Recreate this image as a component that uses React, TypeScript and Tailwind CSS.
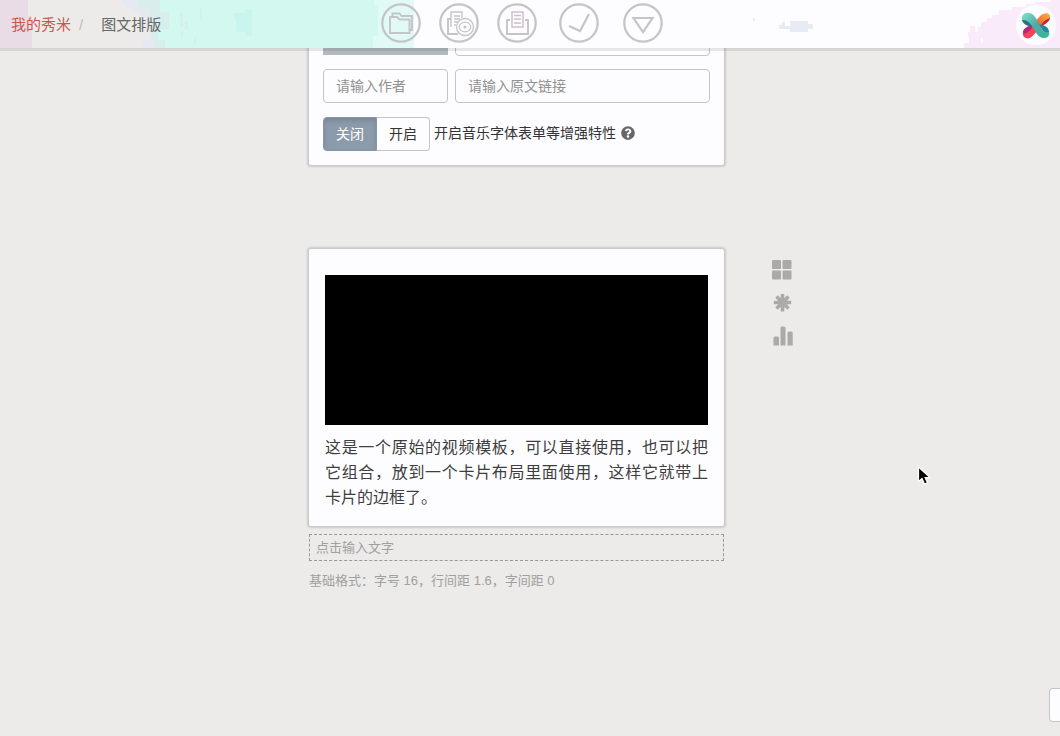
import React from "react";
import { FaQuestionCircle } from "react-icons/fa";

function HeaderWash() {
  return (
    <div className="pointer-events-none absolute inset-0 -z-10 flex justify-between overflow-hidden" aria-hidden="true">
      <svg width="440" height="48" viewBox="0 0 440 48" shapeRendering="crispEdges" className="shrink-0">
        <rect width="155" height="48" fill="#ecebe9" />
        <path d="M0 0h28v16h4v32H0Z" fill="#e9dce6" />
        <path d="M122 0h33v48h-13v-7h7V25h-3v-7h-7v-5h-8V8h-6V4h-3Z" fill="#e4e9f2" />
        <path d="M137 0h45v48h-27v-7h-4V23h-2V8h-12Z" fill="#d8eeec" />
        <path d="M160 0h214v5h4v31h-5v12H165V40h-7V29h11V12h-9Z" fill="#d2f8f0" />
        <path d="M374 0h40v48h-41V36h5V5h-4Z" fill="#e2faf7" />
        <path d="M245 9h7v27h-7v-4h-9V18h-2v-5h11Z" fill="#caf5ef" />
        <path d="M180 13h3v13h-3ZM185 22h3v8h-3ZM200 9h2v11h-2ZM181 32h2v6h-2ZM194 38h2v6h-2Z" fill="#d8eeec" />
      </svg>
      <svg width="320" height="48" viewBox="0 0 320 48" shapeRendering="crispEdges" className="shrink-0">
        <path d="M320 0h-9v2h-16v2h-9v3h-14v3h-13v5h-7v3h-5v4h-6v5h-3v5h-3v-6h-5v6h-2v5h1v6h-5v5h96Z" fill="#f9ebfa" />
        <path d="M241 38h2v5h-2Z" fill="#fdfdff" />
        <path d="M13 18h2v3h-2ZM50 21h18v3h5v5h-5v3H50v-3H39v-4h3v-3h3v4h5Z" fill="#e6ebf4" />
      </svg>
    </div>
  );
}

function ToolButton({ label, children }: { label: string; children: React.ReactNode }) {
  return (
    <button type="button" aria-label={label} className="size-10 shrink-0">
      <svg viewBox="0 0 40 40" fill="none" stroke="#c5c4c6" strokeWidth="1.9" className="size-10">
        <circle cx="20" cy="20" r="18.7" strokeWidth="2.3" />
        {children}
      </svg>
    </button>
  );
}

function Logo() {
  return (
    <svg viewBox="0 0 40 40" className="size-10">
      <defs>
        <linearGradient id="teal" x1="0" y1="0" x2="1" y2="1">
          <stop offset="0" stopColor="#7be6cd" />
          <stop offset=".5" stopColor="#50a8a5" />
          <stop offset="1" stopColor="#2ebd99" />
        </linearGradient>
        <linearGradient id="warm" x1="1" y1="0" x2="0" y2="1">
          <stop offset="0" stopColor="#fbb33e" />
          <stop offset=".5" stopColor="#ee5936" />
          <stop offset="1" stopColor="#f43b60" />
        </linearGradient>
      </defs>
      <circle cx="20" cy="20" r="20" fill="#fdfdff" />
      <path d="M27 9c4-2 8 0 7 4-1 5-7 7-11 11-4 3-6 8-10 9-4 1-7-2-6-6 1-5 7-6 11-9 4-4 5-7 9-9Z" fill="url(#warm)" />
      <path d="M34 13c-3 1-7 3-9 8 4-2 8-4 9-8Z" fill="#b5273e" />
      <path d="M7 27c1-4 5-6 10-7-1 5-5 7-9 9Z" fill="#b92578" />
      <path d="M9 30c5-1 6-6 10-9l4 3c-4 3-6 8-10 9-2 1-4-1-4-3Z" fill="#f4425c" />
      <path d="M6 15c2-2 7 0 11 7-6-1-10-3-11-7Z" fill="#296f86" />
      <path d="M23 19c5 1 10 3 10 8-1 4-6 1-10-8Z" fill="#2a829d" />
      <path d="M13 8c6 1 8 7 11 13 2 5 5 7 9 6 1 3-1 6-5 6-7 0-8-7-12-12-3-5-6-6-10-6-1-5 3-8 7-7Z" fill="url(#teal)" />
    </svg>
  );
}

const fieldClass =
  "h-[34px] min-w-0 rounded-sm border border-[#c3c4c5] bg-transparent px-3 text-sm text-[#444] placeholder:text-[#919191] outline-none";

export default function App() {
  return (
    <div className="relative min-h-screen overflow-hidden bg-[#ecebe9] font-['Liberation_Sans','Noto_Sans_CJK_SC',sans-serif] text-[#333]">
      <header className="absolute inset-x-0 top-0 isolate z-10 grid h-12 grid-cols-[1fr_auto_1fr] bg-[#fdfdff] shadow-[0_3px_0_rgba(0,0,0,0.09)]">
        <HeaderWash />
        <nav aria-label="位置" className="flex h-12 items-center pt-[2px] pl-[11px] text-[15px]">
          <a href="#home" className="text-[#cc5550]">我的秀米</a>
          <span className="pl-2 text-[#bbb]">/</span>
          <span className="pl-[18px] text-[#666]">图文排版</span>
        </nav>
        <div className="mr-4 flex gap-[22px] pt-[3px]">
          <div className="flex gap-[18px]">
            <ToolButton label="打开">
              <path d="M9 14h7l2.500 2.500h10V30H9Z" />
              <path d="M11.500 13.500V10.500h7l2 2.500h10.500v14h-2.500" />
            </ToolButton>
            <ToolButton label="预览">
              <path d="M12 16H9v15h10" />
              <path d="M12 24V9h11v6M15 13h6M15 16h6M15 19h4M15 22h2" strokeWidth="1.4" />
              <circle cx="26" cy="24" r="8.5" strokeWidth="1.3" />
              <ellipse cx="26" cy="24" rx="5.8" ry="4.8" strokeWidth="1.2" />
              <circle cx="26" cy="24" r="1.6" fill="#c5c4c6" stroke="none" />
            </ToolButton>
            <ToolButton label="保存">
              <path d="M13 17h-3v14h21V17h-3" />
              <path d="M15 24V9h11v15ZM17 12.500h7M17 16h7M17 20h7" stroke="#cfbfcf" strokeWidth="1.5" />
            </ToolButton>
          </div>
          <div className="flex gap-6">
            <ToolButton label="完成">
              <path d="m10 23 11 5 9-17" strokeWidth="2.2" />
            </ToolButton>
            <ToolButton label="更多">
              <path d="M10.500 15h19L20 29Z" strokeWidth="2.200" />
            </ToolButton>
          </div>
        </div>
        <a href="#account" aria-label="秀米" className="mt-[5px] mr-1 size-10 justify-self-end">
          <Logo />
        </a>
      </header>

      <main className="grid grid-cols-[1fr_415px_1fr] pt-2 pr-[27px]">
        <section className="col-start-2 rounded-xs bg-[#fdfdff] p-[14px] shadow-[0_0_2px_2px_rgba(0,0,0,0.14)]">
          <div className="mb-[13px] flex gap-[7px]">
            <button type="button" aria-label="封面" className="h-[33px] w-[125px] bg-[#b3babf]" />
            <input aria-label="标题" className={fieldClass + " flex-1"} />
          </div>
          <div className="mb-[14px] flex gap-[7px]">
            <input aria-label="作者" placeholder="请输入作者" className={fieldClass + " w-[125px]"} />
            <input aria-label="原文链接" placeholder="请输入原文链接" className={fieldClass + " flex-1"} />
          </div>
          <div className="flex items-center text-sm">
            <button type="button" aria-pressed="true" className="h-[34px] w-[54px] rounded-l-sm border border-[#8796a6] bg-[#8c9bab] text-white shadow-[inset_0_3px_5px_rgba(0,0,0,0.125)]">
              关闭
            </button>
            <button type="button" aria-pressed="false" className="h-[34px] w-[53px] rounded-r-sm border border-l-0 border-[#c3c4c5]">
              开启
            </button>
            <div className="flex items-center gap-[5px] pb-[3px] pl-1">
              <span>开启音乐字体表单等增强特性</span>
              <FaQuestionCircle className="size-[14px] text-[#666]" />
            </div>
          </div>
        </section>

        <article className="col-start-2 mt-[84px] rounded-xs bg-[#fdfdff] px-4 pt-[26px] pb-4 shadow-[0_0_2px_2px_rgba(0,0,0,0.14)]">
          <div role="img" aria-label="视频" className="h-[150px] bg-black" />
          <p className="mt-[10px] text-justify text-base leading-[25px] text-[#3e3e3e]">
            这是一个原始的视频模板，可以直接使用，也可以把它组合，放到一个卡片布局里面使用，这样它就带上卡片的边框了。
          </p>
        </article>
        <aside className="mt-[84px] flex flex-col items-start gap-[13px] pt-[11px] pl-12 text-[#aaa]">
          <button type="button" aria-label="布局">
            <svg viewBox="0 0 20 20" fill="currentColor" className="size-5">
              <rect width="9" height="9" rx="1" />
              <rect x="10.500" width="9" height="9" rx="1" />
              <rect y="10.500" width="9" height="9" rx="1" />
              <rect x="10.500" y="10.500" width="9" height="9" rx="1" />
            </svg>
          </button>
          <button type="button" aria-label="特效">
            <svg viewBox="0 0 20 20" stroke="currentColor" strokeWidth="3.600" className="size-5">
              <path d="M10.500 1v17.500M1.800 9.500h17.400M4.500 3.500l12 12M16.500 3.500l-12 12" />
            </svg>
          </button>
          <button type="button" aria-label="统计">
            <svg viewBox="0 0 21 20" fill="currentColor" className="h-5 w-[21px]">
              <path d="M1.500 19.500V12q0-1.500 1.500-1.500h2.500q1.500 0 1.500 1.500v7.500ZM8.500 19.500V2q0-1.500 1.500-1.500h2q1.500 0 1.500 1.500v17.500ZM15.500 19.500V7q0-1.500 1.500-1.500h2.200q1.500 0 1.500 1.500v12.500Z" />
            </svg>
          </button>
        </aside>

        <div className="col-start-2 mt-2 text-[13px]">
          <input
            aria-label="正文"
            placeholder="点击输入文字"
            className="block h-[27px] w-full border border-dashed border-[#999] bg-transparent px-[6px] placeholder:text-[#a0a0a0] outline-none"
          />
          <p className="mt-[10px] leading-5 text-[#a0a0a0]">基础格式：字号 16，行间距 1.6，字间距 0</p>
        </div>
      </main>

      <button
        type="button"
        aria-label="展开侧栏"
        className="absolute right-0 bottom-[14px] h-[34px] w-[11px] rounded-l-sm border border-r-0 border-[#c3c4c5] bg-[#fdfdff]"
      />
      <svg viewBox="0 0 14 20" className="pointer-events-none absolute top-[466px] left-[917px] h-5 w-[14px]" aria-hidden="true">
        <path d="M1.500 1v14.500l3.500-3 2.500 5.500 3-1.200-2.400-5.300H13Z" fill="#000" stroke="#fff" strokeWidth="1.200" />
      </svg>
    </div>
  );
}
